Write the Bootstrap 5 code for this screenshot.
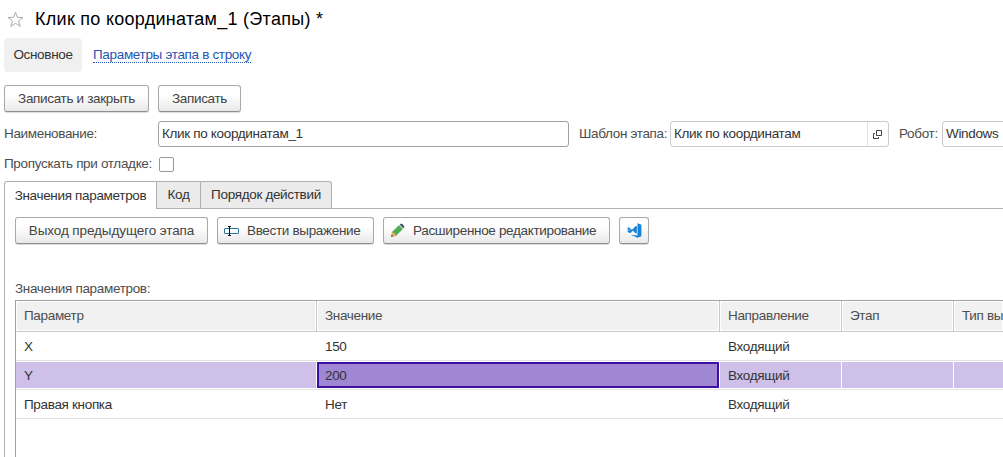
<!DOCTYPE html>
<html lang="ru">
<head>
<meta charset="utf-8">
<meta name="viewport" content="width=device-width, initial-scale=1">
<title>Клик по координатам_1 (Этапы)</title>
<link href="https://cdn.jsdelivr.net/npm/bootstrap@5.3.0/dist/css/bootstrap.min.css" rel="stylesheet">
<style>
body{font:13.5px/16px "Liberation Sans",Arial,sans-serif;letter-spacing:-.33px;color:#333;background:#fff;overflow:hidden;height:100vh}
.app{height:457px;width:1003px;overflow:hidden;white-space:nowrap}
.title-row{height:38px;padding:0 7px}
.title-row h1{font-size:18px;letter-spacing:.28px;line-height:20px;color:#000;margin:0 0 0 11px}
.sections{height:34px;margin-left:4px}
.sections .current{height:34px;width:78px;background:#f0f0f0;border-radius:4px}
.sections a{color:#2456b3;text-decoration:none;border-bottom:1px dotted #2456b3;line-height:14px;margin-left:11px}
.cmd{height:27px;padding:0;border:1px solid #a9a9a9;border-bottom-color:#8f8f8f;border-radius:3px;background:linear-gradient(#fff 35%,#e9e9e9);color:#444;font-size:13.5px;letter-spacing:-.33px;line-height:16px;box-shadow:0 1px 0 #ddd}
.cmd:hover{color:#444}
.commands{margin:13px 0 0 4px;gap:9px}
.fields{height:26px;margin:9px 0 0 4px}
.fields label,.skip label,.caption{color:#4d4d4d;flex-shrink:0}
.box{height:26px;border:1px solid #a0a0a0;border-radius:3px;color:#333;padding:0 3px}
.box.pale{border-color:#ccc}
.skip{height:16px;margin:9px 0 0 4px}
.skip .form-check-input{width:15px;height:15px;margin:0;border:1px solid #999;border-radius:2px}
.tabs{height:28px;margin:9px 0 0 4px;border-bottom:1px solid #b0b0b0}
.tabs .nav-link{height:27px;padding:0;color:#333;background:#ebebeb;border:1px solid #b0b0b0;border-left-width:0;border-bottom:0;border-radius:0;margin:0}
.tabs .nav-link.active{height:28px;background:#fff;color:#333;border-left-width:1px;border-top-left-radius:3px;border-bottom:0}
.tabs li:last-child .nav-link{border-top-right-radius:3px}
.page{margin-left:4px;border-left:1px solid #b0b0b0;padding:8px 0 0 10px;height:248px}
.tools{gap:9px}
.caption{margin:37px 0 0}
.sheet{margin-top:3px;border:1px solid #a0a0a0;border-width:1px 0 0 1px;height:157px}
.line{display:grid;grid-template-columns:301px 403px 122px 112px 1fr;height:29px;border-bottom:1px solid #e2e2e2}
.line>div{display:flex;align-items:center;padding:1px 0 0 8px;border-right:1px solid #fff;margin:1px 0}
.line>div:last-child{border-right:0}
.head{height:31px;border-bottom-color:#c8c8c8;color:#4d4d4d}
.head>div{margin:0;padding-top:0;border-right-color:#c8c8c8;background:#f1f1f1;box-shadow:inset 0 0 0 1px #fff}
.chosen>div{background:#cec0e8}
.chosen>.cursor{background:#9f87d3;border:2px solid #3e0fa3;margin-right:1px;padding-left:6px}
</style>
</head>
<body>
<main class="app">
<header class="title-row d-flex align-items-center">
<svg width="17" height="17" viewBox="0 0 17 17" fill="#fff" stroke="#a9afb8"><path d="M8.5 1 10.3 6.4 16 6.5 11.5 9.9 13.2 15.5 8.5 12.2 3.8 15.5 5.5 9.9 1 6.5 6.7 6.4Z"/></svg>
<h1 class="fw-normal" style="padding-bottom:1px">Клик по координатам_1 (Этапы) *</h1>
</header>
<nav class="sections d-flex align-items-center">
<span class="current d-flex align-items-center justify-content-center"><span>Основное</span></span>
<a href="#"><span>Параметры этапа в строку</span></a>
</nav>
<div class="commands d-flex">
<button class="btn cmd" style="width:145px"><span>Записать и закрыть</span></button>
<button class="btn cmd" style="width:83px"><span>Записать</span></button>
</div>
<div class="fields d-flex align-items-center">
<label style="width:154px">Наименование:</label>
<div class="box d-flex align-items-center flex-shrink-0" style="width:411px">Клик по координатам_1</div>
<label style="width:91px;margin-left:10px">Шаблон этапа:</label>
<div class="box pale d-flex align-items-center flex-shrink-0 pe-0" style="width:219px"><span class="flex-grow-1">Клик по координатам</span>
<span class="h-100 d-flex align-items-center justify-content-center border-start" style="width:21px"><svg width="10" height="9" viewBox="0 0 10 9" fill="none" stroke="#444"><path d="M3.5.5h5v5h-5zM2 3.5H.5v5h5V7"/></svg></span></div>
<label style="width:43px;margin-left:10px">Робот:</label>
<div class="box pale d-flex align-items-center flex-shrink-0" style="width:90px">Windows</div>
</div>
<div class="skip d-flex align-items-center">
<label for="skip" style="width:155px">Пропускать при отладке:</label>
<input class="form-check-input" type="checkbox" id="skip">
</div>
<ul class="nav tabs flex-nowrap">
<li><a class="nav-link active d-flex align-items-center justify-content-center" style="width:153px" href="#"><span>Значения параметров</span></a></li>
<li><a class="nav-link d-flex align-items-center justify-content-center" style="width:44px" href="#"><span>Код</span></a></li>
<li><a class="nav-link d-flex align-items-center justify-content-center" style="width:131px" href="#"><span>Порядок действий</span></a></li>
</ul>
<section class="page">
<div class="tools d-flex">
<button class="btn cmd" style="width:193px;letter-spacing:-.1px"><span>Выход предыдущего этапа</span></button>
<button class="btn cmd d-flex align-items-center" style="width:157px;padding-left:6px"><svg width="16" height="12" viewBox="0 0 16 12" fill="none"><rect x=".5" y="3.5" width="14" height="5" rx=".5" fill="#fff" stroke="#33739f"/><path d="M4 1.5h3M4 10.5h3M5.5 1.5v9" stroke="#111"/></svg><span style="margin-left:7px">Ввести выражение</span></button>
<button class="btn cmd d-flex align-items-center" style="width:227px;padding-left:6px"><svg width="15" height="15" viewBox="0 0 15 15"><path d="m1.2 13.8 1.3-5.2L6.4 12.5Z" fill="#f0b45a" stroke="#9b7439" stroke-width=".4"/><path d="m1.2 13.8.6-2 1.4 1.4Z" fill="#444"/><path d="M2.9 8.6 9 2.5 12.5 6 6.4 12.1Z" fill="#4caf50" stroke="#3d8548" stroke-width=".5"/><path d="m9.7 1.8 1-1h1.4l2.1 2.1v1.4l-1 1Z" fill="#44566a"/></svg><span style="margin-left:8px">Расширенное редактирование</span></button>
<button class="btn cmd d-flex align-items-center justify-content-center" style="width:30px"><svg width="15" height="15" viewBox="0 0 15 15" fill="#1683d8"><path d="M10.5.3 14.4 1.8v11.4l-3.9 1.5-6.7-3 6.7.7Z"/><path d="M9.8 2.8v8L7.3 9.2V5L3 9.9.7 9V4.7l1.1-.5 5.5 4.7V5ZM1.7 6.2v1.9l1-1Z" fill-rule="evenodd"/><path d="m2.3 9.6 6.3-6.3 1.2.7v2L8 5.3 3.5 9.9Z"/></svg></button>
</div>
<div class="caption"><span>Значения параметров:</span></div>
<div class="sheet">
<div class="line head"><div>Параметр</div><div>Значение</div><div>Направление</div><div>Этап</div><div>Тип вы</div></div>
<div class="line"><div>X</div><div>150</div><div>Входящий</div><div></div><div></div></div>
<div class="line chosen"><div>Y</div><div class="cursor">200</div><div>Входящий</div><div></div><div></div></div>
<div class="line"><div>Правая кнопка</div><div>Нет</div><div>Входящий</div><div></div><div></div></div>
</div>
</section>
</main>
<script src="https://cdn.jsdelivr.net/npm/bootstrap@5.3.0/dist/js/bootstrap.bundle.min.js"></script>
</body>
</html>
